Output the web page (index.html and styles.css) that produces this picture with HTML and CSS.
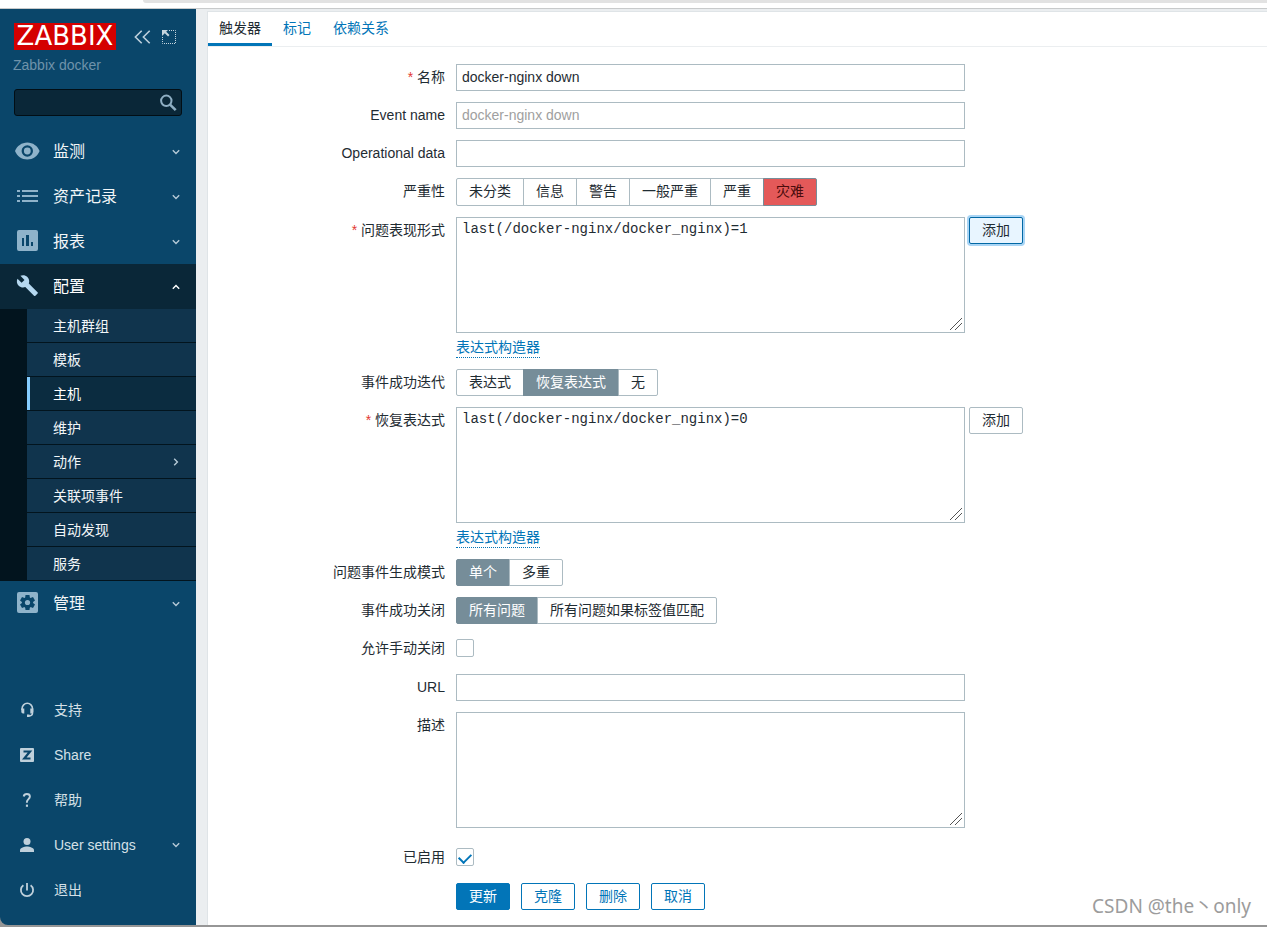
FILE: index.html
```html
<!DOCTYPE html>
<html lang="zh-CN">
<head>
<meta charset="utf-8">
<title>Zabbix docker</title>
<link rel="stylesheet" href="styles.css">
</head>
<body>
<div class="browser-edge"><div class="address-bar"></div></div>
<div class="app">
  <aside class="sidebar">
    <div class="brand">
      <a class="logo" href="#">ZABBIX</a>
      <button class="icon-button" type="button" aria-label="Collapse sidebar">
        <svg width="17" height="14" viewBox="0 0 17 14" fill="none" stroke="#bdd0dc" stroke-width="1.6"><path d="M7.7.8 1.4 7l6.3 6.2M15.7.8 9.4 7l6.3 6.2"/></svg>
      </button>
      <button class="icon-button" type="button" aria-label="Hide sidebar">
        <svg width="16" height="16" viewBox="0 0 16 16"><path d="M8 1.500h6.500v13h-13V8" fill="none" stroke="#c6d5de" stroke-width="1" stroke-dasharray="1 1"/><path d="M1 1h6L5.200 2.800l3.300 3.300-1.400 1.400-3.300-3.300L1 7z" fill="#c6d5de"/></svg>
      </button>
    </div>
    <div class="server-name">Zabbix docker</div>
    <form class="search">
      <input class="search-input" type="text" aria-label="Search">
      <button class="search-button" type="button" aria-label="Search">
        <svg width="18" height="18" viewBox="0 0 18 18" fill="none" stroke="#8fafc4" stroke-width="2"><circle cx="7.300" cy="6.800" r="5.200"/><path d="m11.300 10.800 5.400 5.400" stroke-width="2.600"/></svg>
      </button>
    </form>
    <nav class="menu">
      <a class="menu-item" href="#">
        <svg class="menu-icon" viewBox="0 1 26 25"><path fill-rule="evenodd" d="M13.300 4.500C7.700 4.500 3 8 1 13c2 5 6.700 8.500 12.300 8.500S23.600 18 25.600 13C23.600 8 18.900 4.500 13.300 4.500zM13.300 18.700a5.700 5.700 0 1 1 0-11.400 5.700 5.700 0 0 1 0 11.400zM13.300 9.600a3.400 3.400 0 1 0 0 6.800 3.400 3.400 0 0 0 0-6.800z"/></svg>
        <span class="menu-text">监测</span>
        <svg class="arrow" viewBox="0 0 8 8"><path d="m.8 2.200 3.200 3.200 3.200-3.200"/></svg>
      </a>
      <a class="menu-item" href="#">
        <svg class="menu-icon" viewBox="0 1 26 25"><path d="M3 7h3v2H3zM3 12h3v2H3zM3 17h3v2H3zM8 7h16v2H8zM8 12h16v2H8zM8 17h16v2H8z"/></svg>
        <span class="menu-text">资产记录</span>
        <svg class="arrow" viewBox="0 0 8 8"><path d="m.8 2.200 3.200 3.200 3.200-3.200"/></svg>
      </a>
      <a class="menu-item" href="#">
        <svg class="menu-icon" viewBox="0 1 26 25"><path fill-rule="evenodd" d="M5 2h17a2 2 0 0 1 2 2v17a2 2 0 0 1-2 2H5a2 2 0 0 1-2-2V4a2 2 0 0 1 2-2zM8 10v8h2v-8zM12 7v11h3V7zM17 14v4h2v-4z"/></svg>
        <span class="menu-text">报表</span>
        <svg class="arrow" viewBox="0 0 8 8"><path d="m.8 2.200 3.200 3.200 3.200-3.200"/></svg>
      </a>
      <a class="menu-item menu-item-open" href="#">
        <svg class="menu-icon" viewBox="0 1 26 25"><path d="m23.500 19.300-8.700-8.700c.9-2.200.4-4.800-1.400-6.600-1.900-1.900-4.700-2.300-7-1.200l4.100 4.100-2.900 2.900L3.500 5.700C2.300 8 2.800 10.800 4.700 12.700c1.800 1.800 4.400 2.300 6.600 1.400l8.700 8.700c.4.400 1 .4 1.400 0l2.200-2.200c.4-.4.400-1-.1-1.300z"/></svg>
        <span class="menu-text">配置</span>
        <svg class="arrow" viewBox="0 0 8 8"><path d="m.8 5.800 3.200-3.200 3.200 3.200"/></svg>
      </a>
      <div class="submenu">
        <a class="submenu-item" href="#">主机群组</a>
        <a class="submenu-item" href="#">模板</a>
        <a class="submenu-item submenu-item-current" href="#">主机</a>
        <a class="submenu-item" href="#">维护</a>
        <a class="submenu-item" href="#">动作<svg class="arrow" viewBox="0 0 8 8"><path d="m2.200.8 3.200 3.200-3.200 3.200"/></svg></a>
        <a class="submenu-item" href="#">关联项事件</a>
        <a class="submenu-item" href="#">自动发现</a>
        <a class="submenu-item" href="#">服务</a>
      </div>
      <a class="menu-item" href="#">
        <svg class="menu-icon" viewBox="0 1 26 25"><rect x="3" y="2" width="21" height="21" rx="2"/><g fill="#0a466a"><circle cx="13.500" cy="12.500" r="5.600"/><path d="M11.500 5h4l.5 4h-5zM11.500 20h4l.5-4h-5z"/><path d="M11.500 5h4l.5 4h-5zM11.500 20h4l.5-4h-5z" transform="rotate(60 13.500 12.500)"/><path d="M11.500 5h4l.5 4h-5zM11.500 20h4l.5-4h-5z" transform="rotate(120 13.500 12.500)"/></g><circle cx="13.500" cy="12.500" r="2.600"/></svg>
        <span class="menu-text">管理</span>
        <svg class="arrow" viewBox="0 0 8 8"><path d="m.8 2.200 3.200 3.200 3.200-3.200"/></svg>
      </a>
    </nav>
    <nav class="menu menu-user">
      <a class="menu-item" href="#">
        <svg class="menu-icon" viewBox="0 0 26 25"><path d="M8.100 13v-1.500a5.200 5.200 0 0 1 10.400 0V16c0 2-1.500 3-4 3" fill="none" stroke="#bfd0db" stroke-width="1.600"/><path d="M7.300 11.500h3v5H9a1.700 1.700 0 0 1-1.700-1.700zM16.300 11.500h3v3.300a1.700 1.700 0 0 1-1.700 1.700h-1.300zM13 17.500h2.500v2.500H13z"/></svg>
        <span class="menu-text">支持</span>
      </a>
      <a class="menu-item" href="#">
        <svg class="menu-icon" viewBox="0 0 26 25"><rect x="6" y="6" width="14" height="14" rx="1"/><path d="M9.500 9.500h6.500L10.300 16.500h6.200" fill="none" stroke="#0a466a" stroke-width="2.200"/></svg>
        <span class="menu-text">Share</span>
      </a>
      <a class="menu-item" href="#">
        <svg class="menu-icon" viewBox="0 0 26 25"><path d="M9.700 9.500C10 7.500 11.200 7 12.900 7c1.800 0 3 .9 3 2.500 0 2.500-3 2.700-3 5.500v.8" fill="none" stroke="#bfd0db" stroke-width="1.900"/><path d="M11.900 17.600h2.100v2.200h-2.100z"/></svg>
        <span class="menu-text">帮助</span>
      </a>
      <a class="menu-item" href="#">
        <svg class="menu-icon" viewBox="0 0 26 25"><circle cx="13" cy="9.500" r="3.500"/><path d="M6 20v-1.800C6 15.800 10.600 14.600 13 14.600s7 1.200 7 3.600V20z"/></svg>
        <span class="menu-text">User settings</span>
        <svg class="arrow" viewBox="0 0 8 8"><path d="m.8 2.200 3.200 3.200 3.200-3.200"/></svg>
      </a>
      <a class="menu-item" href="#">
        <svg class="menu-icon" viewBox="0 0 26 25"><path d="M9.400 8.200a6.100 6.100 0 1 0 7.200 0M13 6v7.500" fill="none" stroke="#bfd0db" stroke-width="1.800"/></svg>
        <span class="menu-text">退出</span>
      </a>
    </nav>
  </aside>
  <main class="page">
    <div class="panel">
      <nav class="tabs">
        <a class="tab tab-current" href="#">触发器</a>
        <a class="tab" href="#">标记</a>
        <a class="tab" href="#">依赖关系</a>
      </nav>
      <form class="trigger-form">
        <div class="row">
          <label class="label required" for="name">名称</label>
          <div class="field"><input class="text" id="name" type="text" value="docker-nginx down"></div>
        </div>
        <div class="row">
          <label class="label" for="event-name">Event name</label>
          <div class="field"><input class="text" id="event-name" type="text" placeholder="docker-nginx down"></div>
        </div>
        <div class="row">
          <label class="label" for="opdata">Operational data</label>
          <div class="field"><input class="text" id="opdata" type="text"></div>
        </div>
        <div class="row">
          <span class="label" id="severity-label">严重性</span>
          <div class="field">
            <div class="segments segments-severity" role="radiogroup" aria-labelledby="severity-label">
              <label class="segment"><input type="radio" name="severity"><span>未分类</span></label>
              <label class="segment"><input type="radio" name="severity"><span>信息</span></label>
              <label class="segment"><input type="radio" name="severity"><span>警告</span></label>
              <label class="segment"><input type="radio" name="severity"><span>一般严重</span></label>
              <label class="segment"><input type="radio" name="severity"><span>严重</span></label>
              <label class="segment"><input type="radio" name="severity" checked><span>灾难</span></label>
            </div>
          </div>
        </div>
        <div class="row">
          <label class="label required" for="expression">问题表现形式</label>
          <div class="field">
            <div class="expression">
              <textarea class="area mono" id="expression" spellcheck="false">last(/docker-nginx/docker_nginx)=1</textarea>
              <button class="button button-grey button-focused" type="button">添加</button>
            </div>
            <div class="builder"><a class="builder-link" href="#">表达式构造器</a></div>
          </div>
        </div>
        <div class="row">
          <span class="label" id="ok-event-label">事件成功迭代</span>
          <div class="field">
            <div class="segments" role="radiogroup" aria-labelledby="ok-event-label">
              <label class="segment"><input type="radio" name="ok-event"><span>表达式</span></label>
              <label class="segment"><input type="radio" name="ok-event" checked><span>恢复表达式</span></label>
              <label class="segment"><input type="radio" name="ok-event"><span>无</span></label>
            </div>
          </div>
        </div>
        <div class="row">
          <label class="label required" for="recovery">恢复表达式</label>
          <div class="field">
            <div class="expression">
              <textarea class="area mono" id="recovery" spellcheck="false">last(/docker-nginx/docker_nginx)=0</textarea>
              <button class="button button-grey" type="button">添加</button>
            </div>
            <div class="builder"><a class="builder-link" href="#">表达式构造器</a></div>
          </div>
        </div>
        <div class="row">
          <span class="label" id="mode-label">问题事件生成模式</span>
          <div class="field">
            <div class="segments" role="radiogroup" aria-labelledby="mode-label">
              <label class="segment"><input type="radio" name="mode" checked><span>单个</span></label>
              <label class="segment"><input type="radio" name="mode"><span>多重</span></label>
            </div>
          </div>
        </div>
        <div class="row">
          <span class="label" id="close-label">事件成功关闭</span>
          <div class="field">
            <div class="segments" role="radiogroup" aria-labelledby="close-label">
              <label class="segment"><input type="radio" name="close" checked><span>所有问题</span></label>
              <label class="segment"><input type="radio" name="close"><span>所有问题如果标签值匹配</span></label>
            </div>
          </div>
        </div>
        <div class="row">
          <label class="label" for="manual-close">允许手动关闭</label>
          <div class="field"><div class="check-line"><input class="check" id="manual-close" type="checkbox"></div></div>
        </div>
        <div class="row">
          <label class="label" for="url">URL</label>
          <div class="field"><input class="text" id="url" type="text"></div>
        </div>
        <div class="row row-description">
          <label class="label" for="description">描述</label>
          <div class="field"><textarea class="area" id="description"></textarea></div>
        </div>
        <div class="row">
          <label class="label" for="enabled">已启用</label>
          <div class="field"><div class="check-line"><input class="check" id="enabled" type="checkbox" checked></div></div>
        </div>
        <div class="row">
          <span></span>
          <div class="field actions">
            <button class="button button-primary" type="button">更新</button>
            <button class="button" type="button">克隆</button>
            <button class="button" type="button">删除</button>
            <button class="button" type="button">取消</button>
          </div>
        </div>
      </form>
    </div>
  </main>
  <div class="watermark">CSDN @the丶only</div>
</div>
</body>
</html>
```
FILE: styles.css
```css
* {
  box-sizing: border-box;
}

body {
  margin: 0;
  min-height: 100vh;
  display: flex;
  flex-direction: column;
  background: #fff;
  color: #1f2c33;
  font: 14px/20px "Liberation Sans", "Noto Sans CJK SC", sans-serif;
}

a {
  color: #0275b8;
  text-decoration: none;
}

input,
textarea,
button {
  font: inherit;
  color: inherit;
  margin: 0;
}

.browser-edge {
  height: 9px;
  padding-left: 143px;
  border-bottom: 1px solid #c8cacb;
}

.address-bar {
  height: 3px;
  background: #e2e2e2;
  border-bottom-left-radius: 8px;
}

.app {
  position: relative;
  flex: 1;
  display: flex;
  background: #969696;
  border-bottom: 2px solid #969696;
}

/* Sidebar */

.sidebar {
  flex: none;
  width: 196px;
  display: flex;
  flex-direction: column;
  padding: 14px 0 13px;
  background: #0a466a;
  border-bottom-left-radius: 8px;
}

.brand {
  display: flex;
  align-items: center;
  padding-left: 14px;
}

.logo {
  width: 102px;
  margin-right: 18px;
  background: #d40000;
  color: #fff;
  font: 26px/27px "DejaVu Sans", sans-serif;
  text-align: center;
}

.icon-button {
  display: flex;
  margin-right: 10px;
  padding: 0;
  border: 0;
  background: none;
}

.server-name {
  padding: 5px 13px 0;
  color: #6f93aa;
}

.search {
  display: flex;
  margin: 14px 14px 13px;
  height: 27px;
  background: #0a2738;
  border: 1px solid #020e15;
  border-radius: 3px;
}

.search-input {
  flex: 1;
  min-width: 0;
  border: 0;
  background: none;
  color: #fff;
}

.search-button {
  display: flex;
  align-items: center;
  padding: 0 4px;
  border: 0;
  background: none;
}

.menu-item {
  height: 45px;
  display: flex;
  align-items: center;
  padding: 0 16px 0 14px;
  color: #f2f6f8;
  font-size: 16px;
}

.menu-icon {
  width: 26px;
  height: 25px;
  margin-right: 13px;
  fill: #8fb3ca;
}

.menu-text {
  flex: 1;
}

.arrow {
  width: 8px;
  height: 8px;
  fill: none;
  stroke: #b6cad7;
  stroke-width: 1.4;
}

.menu-item-open {
  background: #0a2738;
  color: #fff;
}

.menu-item-open .menu-icon {
  fill: #b5d8f0;
}

.menu-item-open .arrow {
  stroke: #fff;
}

.submenu {
  display: flex;
  flex-direction: column;
  gap: 1px;
  padding: 0 0 1px 27px;
  background: #02141e;
}

.submenu-item {
  height: 33px;
  display: flex;
  align-items: center;
  justify-content: space-between;
  padding: 0 16px 0 23px;
  border-left: 3px solid transparent;
  background: #10344d;
  color: #f2f6f8;
}

.submenu-item-current {
  background: #0b2c40;
  border-left-color: #85cdff;
  color: #fff;
}

.menu-user {
  margin-top: auto;
}

.menu-user .menu-item {
  font-size: 14px;
  color: #d5e0e7;
}

.menu-user .menu-icon {
  margin-right: 14px;
  fill: #bfd0db;
}

/* Page */

.page {
  flex: 1;
  min-width: 0;
  display: flex;
  padding: 2px 0 0 11px;
  background: #ebeef0;
}

.panel {
  flex: 1;
  min-width: 0;
  background: #fff;
  border: solid #dfe4e7;
  border-width: 1px 0 0 1px;
}

.tabs {
  display: flex;
  border-bottom: 1px solid #ebeef0;
}

.tab {
  padding: 6px 11px 5px;
  border-bottom: 3px solid transparent;
}

.tab-current {
  border-bottom-color: #0275b8;
  color: #1f2c33;
}

.trigger-form {
  display: flex;
  flex-direction: column;
  gap: 11px;
  padding: 17px 0 15px;
}

.row {
  display: grid;
  grid-template-columns: 237px minmax(0, 1fr);
  column-gap: 11px;
}

.label {
  padding-top: 3px;
  text-align: right;
}

.required::before {
  content: "* ";
  color: #e33734;
}

.text,
.area {
  display: block;
  width: 100%;
  max-width: 509px;
  border: 1px solid #acbbc2;
  border-radius: 0;
  background: #fff;
  outline: 0;
}

.text {
  height: 27px;
  padding: 0 5px 2px;
}

.text::placeholder {
  color: #a0a0a0;
}

.area {
  height: 116px;
  padding: 1px 5px;
  resize: vertical;
}

.area::-webkit-resizer {
  background: linear-gradient(135deg, transparent 48%, #555 48%, #555 53%, transparent 53%, transparent 68%, #555 68%, #555 73%, transparent 73%) 1px 1px / 12px 12px no-repeat;
}

.mono {
  font-family: "Liberation Mono", monospace;
}

.expression {
  display: flex;
  align-items: flex-start;
  gap: 4px;
}

.builder {
  height: 25px;
  padding-top: 4px;
}

.builder-link {
  display: inline-block;
  border-bottom: 1px dotted #0275b8;
  line-height: 19px;
}

.segments {
  display: inline-flex;
  vertical-align: top;
}

.segment {
  position: relative;
  margin-left: -1px;
}

.segment:first-child {
  margin-left: 0;
}

.segment input {
  position: absolute;
  opacity: 0;
}

.segment span {
  display: block;
  padding: 0 12px 1px;
  border: 1px solid #acbbc2;
  line-height: 24px;
  white-space: nowrap;
}

.segment:first-child span {
  border-radius: 2px 0 0 2px;
}

.segment:last-child span {
  border-radius: 0 2px 2px 0;
}

.segment input:checked + span {
  position: relative;
  background: #768d99;
  border-color: #768d99;
  color: #fff;
}

.segments-severity .segment span {
  padding-bottom: 2px;
}

.segments-severity .segment input:checked + span {
  background: #e45959;
  color: #4b0c0c;
}

.check-line {
  height: 28px;
  padding-top: 4px;
}

.check {
  appearance: none;
  display: flex;
  justify-content: center;
  width: 18px;
  height: 18px;
  border: 1px solid #acbbc2;
  border-radius: 2px;
  background: #fff;
}

.check:checked::before {
  content: "";
  width: 10px;
  height: 6px;
  margin-top: 4px;
  border: solid #0275b8;
  border-width: 0 0 2px 2px;
  transform: rotate(-45deg);
}

.row-description {
  padding-bottom: 5px;
}

.button {
  height: 27px;
  padding: 0 12px;
  border: 1px solid #0275b8;
  border-radius: 2px;
  background: #fff;
  color: #0275b8;
  line-height: 25px;
}

.button-primary {
  background: #0275b8;
  color: #fff;
}

.button-grey {
  border-color: #acbbc2;
  color: #1f2c33;
}

.button-focused {
  background: #e8f5ff;
  border-color: #0268a5;
  box-shadow: 0 0 0 2px #a9d5f5;
}

.actions {
  display: flex;
  gap: 11px;
}

.watermark {
  position: absolute;
  right: 16px;
  bottom: 4px;
  color: #9c9c9c;
  font: 19px/30px "Noto Sans", "Noto Sans CJK SC", sans-serif;
}
```
